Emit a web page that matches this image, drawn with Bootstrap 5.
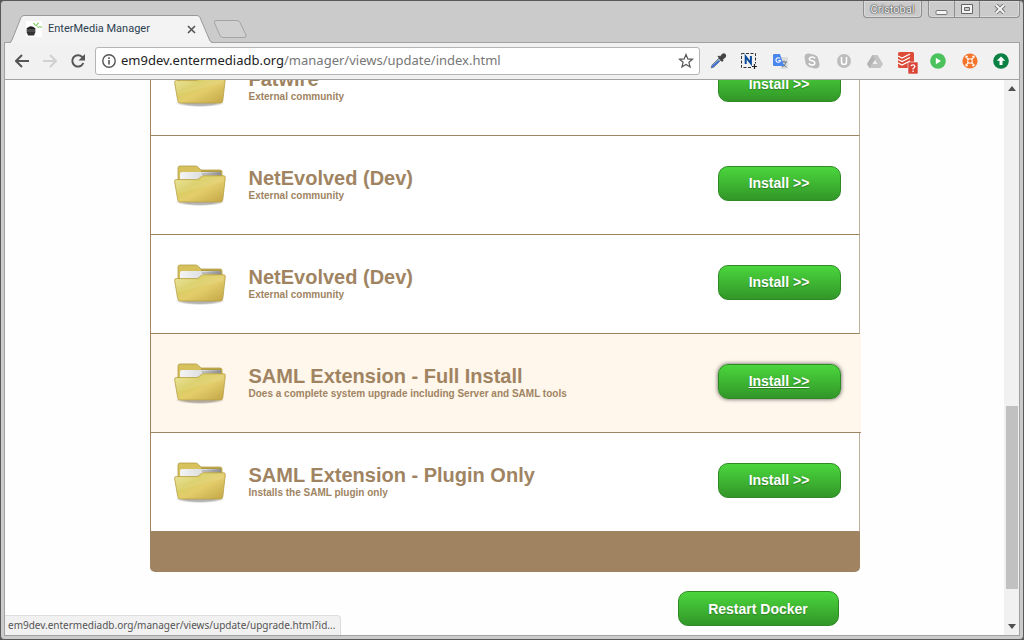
<!DOCTYPE html>
<html lang="en">
<head>
<meta charset="utf-8">
<meta name="viewport" content="width=device-width, initial-scale=1">
<title>EnterMedia Manager</title>
<link href="https://cdn.jsdelivr.net/npm/bootstrap@5.3.0/dist/css/bootstrap.min.css" rel="stylesheet">
<style>
:root { --tan: #a08462; }
body { font-family: "Liberation Sans", Arial, sans-serif; background: #555; }
.window { background: #cbcbcb; border: 1px solid #5a5858; border-radius: 4px; padding: 0 3px 3px; }
.ui-text { font-family: Roboto, "Noto Sans", sans-serif; }
.address-text { font-family: "Noto Sans", "Open Sans", sans-serif; }
/* title bar */
.title-strip { height: 41px; padding-left: 5px; }
.tab-shape { width: 204px; height: 28px; margin-bottom: -1px; z-index: 1; }
.tab-shape > svg, .new-tab svg { display: block; }
.tab-back { position: absolute; inset: 0; }
.tab-label { position: relative; height: 28px; padding: 0 17px; color: #2c3e50; font-size: 11px; }
.tab-label span { margin-left: 6px; }
.bare { background: none; border: 0; padding: 0; line-height: 1; display: inline-flex; align-items: center; justify-content: center; }
.win-controls { gap: 6px; }
.win-box { height: 17px; border: 1px solid #8f8f8f; border-top: 0; border-radius: 0 0 4px 4px; box-shadow: inset 0 0 0 1px #d9d9d9; }
.win-box .bare { height: 16px; }
.win-box .bare + .bare { border-left: 1px solid #8f8f8f; }
.user-btn { width: 57px; font-size: 11px; color: #f4f4f4; text-shadow: 0 0 1px #444, 0 0 1px #444, 0 0 2px #555; }
.w-min { width: 25px; } .w-max { width: 25px; } .w-close { width: 40px; }
/* toolbar */
.tool-strip { height: 38px; background: #f1f1f1; border: 1px solid #a2a2a2; padding: 0 8px 0 5px; }
.nav-set { gap: 4px; }
.nav-set .bare { width: 24px; height: 24px; }
.address { height: 28px; background: #fff; border: 1px solid #b5b5b5; border-radius: 3px; padding: 0 5px; margin-left: 5px; }
.url-host { color: #222; }
.url-text { font-size: 13px; color: #777; white-space: nowrap; text-decoration: none; }
.extensions { width: 303px; margin-left: 8px; }
.extensions .bare { width: 20px; height: 24px; }
/* page */
.page-area { background: #fefefe; border: 1px solid #a2a2a2; border-top: 0; flex: 1 1 0; min-height: 0; }
.scroll-pane { overflow: hidden; padding-bottom: 9px; }
.listing { width: 100%; max-width: 710px; margin: 0 auto; }
.ext-row { height: 99px; border: 1px solid #c0ae9c; border-left-color: var(--tan); border-bottom-color: var(--tan); border-top: 0; background: #fff; padding: 0 18px 0 23px; }
.ext-row.hovered { background: #fff6ec; margin-right: -1px; border-right: 0; padding-right: 20px; }
.ext-row svg { flex: none; }
.ext-row .btn-go { margin-bottom: 4px; }
.ext-info { margin-left: 23px; padding-bottom: 2px; color: var(--tan); font-weight: 700; }
.ext-info h2 { font-size: 20px; line-height: 22px; font-weight: 700; margin: 0 0 1px; }
.ext-info p { font-size: 10px; line-height: 12px; margin: 0; }
.list-foot { height: 40px; background: var(--tan); border-radius: 0 0 5px 5px; }
.btn-go { width: 123px; height: 35px; padding: 0; border: 1px solid #2f8a26; border-radius: 10px; background: linear-gradient(#4bd63d, #329628); color: #fff; font-size: 14px; line-height: 32px; font-weight: 700; text-shadow: 0 1px 1px #2c7d24; }
.btn-go:hover, .btn-go:active { color: #fff; }
.btn-go.hot { text-decoration: underline; box-shadow: 0 0 4px #555; }
.btn-wide { width: 161px; margin: 19px 21px 0 0; }
/* scroll bar */
.scroll-track { width: 15px; background: #f1f1f1; }
.scroll-track .bare { height: 17px; }
.thumb { width: 12px; background: #c1c1c1; }
.room-above { flex: 310 1 0; } .thumb { flex: 183 1 0; } .room-below { flex: 29 1 0; }
.status-tip { position: absolute; left: 0; bottom: 0; height: 20px; padding: 0 5px 0 3px; background: #f1f1f1; border: 1px solid #ddd; border-left: 0; border-bottom: 0; border-radius: 0 4px 0 0; font-size: 10px; line-height: 19px; color: #555; }
</style>
</head>
<body>
<svg width="0" height="0" class="position-absolute" aria-hidden="true">
  <defs>
    <linearGradient id="front" x1="0" y1="0" x2="1" y2="1"><stop offset="0" stop-color="#ece59a"/><stop offset=".35" stop-color="#d9cd62"/><stop offset=".55" stop-color="#e3cd6a"/><stop offset="1" stop-color="#c3a545"/></linearGradient>
    <linearGradient id="paper" x1="0" y1="0" x2="1" y2="0"><stop offset="0" stop-color="#f4f4f4"/><stop offset=".6" stop-color="#dadbdd"/><stop offset="1" stop-color="#8f9093"/></linearGradient>
    <radialGradient id="shade"><stop offset=".6" stop-color="#000" stop-opacity=".3"/><stop offset="1" stop-color="#000" stop-opacity="0"/></radialGradient>
    <symbol id="folder" viewBox="0 0 52 42">
      <ellipse cx="26" cy="38" rx="25" ry="4" fill="url(#shade)"/>
      <path d="M4 31V4q0-2 2-2h15.500q2 0 3 1.500L27 6h19q2 0 2 2v23z" fill="#d6c15c" stroke="#b39d45" stroke-width=".8"/>
      <path d="M27 6.500h19.500q1 .5 1 2V15H27z" fill="#b09a42"/>
      <path d="M6 10q0-2 2-2h38q1 0 1 1v9H6z" fill="url(#paper)"/>
      <path d="M28 10h18.500" stroke="#8a8b8e" stroke-width=".8"/>
      <path d="M.6 17.500q-.2-2 1.800-2h20.100q1.500 0 2.500-1l2.500-2q1-.8 2.500-.8h19.500q2 0 1.800 2l-2.500 22q-.3 2.300-2.500 2.300H6.200q-2.200 0-2.500-2.500z" fill="url(#front)" stroke="#b89f45" stroke-width=".8"/>
      <path d="M1.500 17h22q2 0 3-1l2.500-2.300q.7-.7 2-.7h19l-.6 5Q30 22 3 30z" fill="#fff" opacity=".1"/>
    </symbol>
  </defs>
</svg>

<div class="window vh-100 d-flex flex-column">
  <header class="title-strip d-flex flex-shrink-0">
    <div class="tab-shape position-relative align-self-end">
      <svg class="tab-back" width="204" height="28" viewBox="0 0 204 28" aria-hidden="true"><path d="M0 28 Q2 28 3 25.500L12 2.500Q13 .5 15 .5H188Q190 .5 191 2.500L201 26Q202 28 204 28z" fill="#f3f3f3"/><path d="M0 27.500Q2 27.500 3 25L12 2.500Q13 .5 15 .5H188Q190 .5 191 2.500L201 26Q202 27.500 204 27.500" fill="none" stroke="#999"/></svg>
      <div class="tab-label ui-text d-flex align-items-center">
        <svg width="16" height="16" viewBox="0 0 16 16" aria-hidden="true"><path d="M0 0h16v16H0z" fill="#fff"/><path d="M1 7q4-3.500 8 0l.5 1H.5z" fill="#222"/><path d="M.5 8h9v3h-9z" fill="#777"/><path d="M2 8v3M4 8v3M6 8v3M8 8v3" stroke="#222"/><path d="M.5 11h9L8 14.500H2z" fill="#333"/><path d="M7.500 2l2 2.500M12.500 1.500l-2.500 3.500M11 6h5" stroke="#7c5" stroke-width="1.200"/></svg>
        <span class="flex-grow-1">EnterMedia Manager</span>
        <button class="bare" aria-label="Close tab"><svg width="9" height="9" viewBox="0 0 9 9"><path d="M1 1l7 7M8 1L1 8" stroke="#555" stroke-width="1.600"/></svg></button>
      </div>
    </div>
    <button class="bare new-tab align-self-end mb-1" aria-label="New tab"><svg width="34" height="18" viewBox="0 0 34 18"><path d="M3 .5H24Q26 .5 27 2.500L33 15Q34 17.500 31 17.500H10Q8 17.500 7 15.500L1.500 3Q.5 .5 3 .5z" fill="#d0d0d0" stroke="#a4a4a4"/></svg></button>
    <div class="win-controls d-flex align-items-start ms-auto">
      <div class="win-box d-flex"><button class="bare user-btn ui-text">Cristobal</button></div>
      <div class="win-box d-flex">
        <button class="bare w-min" aria-label="Minimize"><svg width="13" height="12" viewBox="0 0 13 12"><rect x="1" y="7.500" width="11" height="4" rx="1" fill="#f4f4f4" stroke="#777"/></svg></button>
        <button class="bare w-max" aria-label="Maximize"><svg width="12" height="10" viewBox="0 0 12 10"><path d="M.5 .5h11v9H.5zM3.500 3.500h5v3h-5z" fill="#f4f4f4" fill-rule="evenodd" stroke="#666"/></svg></button>
        <button class="bare w-close" aria-label="Close"><svg width="12" height="10" viewBox="0 0 12 10"><path d="M2 1l8 8M10 1L2 9" stroke="#777" stroke-width="4"/><path d="M2 1l8 8M10 1L2 9" stroke="#f4f4f4" stroke-width="2"/></svg></button>
      </div>
    </div>
  </header>

  <nav class="tool-strip d-flex flex-shrink-0 align-items-center" aria-label="Browser toolbar">
    <div class="nav-set d-flex">
      <button class="bare" aria-label="Back"><svg width="14" height="14" viewBox="0 0 14 14"><path d="M14 7H1.500M7 1L1 7l6 6" fill="none" stroke="#555" stroke-width="2"/></svg></button>
      <button class="bare" aria-label="Forward"><svg width="14" height="14" viewBox="0 0 14 14"><path d="M0 7h12.500M7 1l6 6-6 6" fill="none" stroke="#d0d0d0" stroke-width="2"/></svg></button>
      <button class="bare" aria-label="Reload"><svg width="16" height="16" viewBox="0 0 16 16"><path d="M13.300 10A5.700 5.700 0 1 1 12 3.800L13.500 5.300" fill="none" stroke="#555" stroke-width="2"/><path d="M15 1v6.500H8.500z" fill="#555"/></svg></button>
    </div>
    <div class="address d-flex flex-grow-1 align-items-center address-text">
      <button class="bare" aria-label="Site information"><svg width="16" height="16" viewBox="0 0 16 16"><circle cx="8" cy="8" r="6.200" fill="none" stroke="#555" stroke-width="1.400"/><path d="M8 7v4.500M8 4.300v1.600" stroke="#555" stroke-width="1.600"/></svg></button>
      <a class="url-text flex-grow-1 ms-1" href="#"><span class="url-host">em9dev.entermediadb.org</span>/manager/views/update/index.html</a>
      <button class="bare" aria-label="Bookmark"><svg width="16" height="16" viewBox="0 0 16 16"><path d="M8 1.500l1.800 4.400 4.700.4-3.600 3 1.200 4.700L8 11.500 3.900 14l1.200-4.700-3.600-3 4.700-.4z" fill="none" stroke="#555" stroke-width="1.200"/></svg></button>
    </div>
    <div class="extensions d-flex flex-shrink-0 justify-content-between">
      <button class="bare" aria-label="Color picker"><svg width="18" height="18" viewBox="0 0 18 18"><path d="M2 16l1-3 7-7 2 2-7 7z" fill="#9ab" stroke="#789"/><path d="M3 15l7-6" stroke="#36d" stroke-width="1.500"/><path d="M8.500 4.500l1.500-1 1 1L13 2q2-1.500 3.500 0t0 3.500L14 7.500l.5 1-1.500 1.500z" fill="#444"/></svg></button>
      <button class="bare" aria-label="Capture"><svg width="18" height="18" viewBox="0 0 18 18"><path d="M1.500 1.500h14v10M11 15.500H1.500v-14" fill="none" stroke="#333" stroke-dasharray="3 1.500"/><path d="M5.700 12V4.700l5.200 6.600V4" fill="none" stroke="#0a4a9c" stroke-width="2"/><path d="M14.500 12v5M12 14.500h5" stroke="#222" stroke-width="1.200"/></svg></button>
      <button class="bare" aria-label="Translate"><svg width="17" height="17" viewBox="0 0 17 17"><path d="M7 4h8q1 0 1 1v10q0 1-1 1H9z" fill="#ddd"/><path d="M9 9h6M12 7.500V9M14 9q-1 4-4 5M10.500 10.500q1 2 4 3.500" fill="none" stroke="#678"/><path d="M2 1h6l4 12H2q-1 0-1-1V2q0-1 1-1z" fill="#4a86ec"/><path d="M8 5.500a2.300 2.300 0 1 0 .5 2H6.300" fill="none" stroke="#fff" stroke-width="1.100"/></svg></button>
      <button class="bare" aria-label="Skype"><svg width="16" height="16" viewBox="0 0 16 16"><g fill="#b9b9b9"><circle cx="8" cy="8" r="6.800"/><circle cx="4.500" cy="4.500" r="4"/><circle cx="11.500" cy="11.500" r="4"/></g><path d="M11 5.500Q10 4 8 4T5.300 5.800Q5.300 7.300 8 7.800t2.800 2.300Q10.500 12 8 12t-3-1.700" fill="none" stroke="#fff" stroke-width="1.600"/></svg></button>
      <button class="bare" aria-label="Shield"><svg width="16" height="16" viewBox="0 0 16 16"><circle cx="8" cy="8" r="7" fill="#bdbdbd"/><path d="M5.500 4v5q0 2.500 2.500 2.500T10.500 9V4" fill="none" stroke="#fff" stroke-width="1.500"/></svg></button>
      <button class="bare" aria-label="Drive"><svg width="16" height="16" viewBox="0 0 16 16"><path d="M5.500 2h5L16 11l-2.500 4h-11L0 11z" fill="#c4c4c4"/><path d="M5.500 2L0 11l2.500 4L8 6z" fill="#b4b4b4"/><path d="M8 7l2.500 4h-5z" fill="#eee"/></svg></button>
      <button class="bare" aria-label="Tasks"><svg width="22" height="22" viewBox="0 -1 22 22" class="flex-shrink-0 mt-1"><rect x="2" y="-1" width="16" height="16" rx="1.500" fill="#dd4b39"/><path d="M2 3l4 2 8-4M2 6.500l4 2 8-4M2 10l4 2 8-4" fill="none" stroke="#fff" stroke-width="1.200"/><rect x="12" y="9" width="10" height="12" rx="1" fill="#da4437" stroke="#f1f1f1" stroke-width=".6"/><path d="M15 13.200Q15.300 11.800 17 11.800T18.900 13.400Q18.900 14.300 17.100 15.500V16.500M17.100 17.500v1.400" fill="none" stroke="#fff" stroke-width="1.300"/></svg></button>
      <button class="bare" aria-label="Play"><svg width="16" height="16" viewBox="0 0 16 16"><circle cx="8" cy="8" r="7.800" fill="#4bc25b"/><path d="M5.800 4.800v6.400L11 8z" fill="#fff"/></svg></button>
      <button class="bare" aria-label="Film"><svg width="16" height="16" viewBox="0 0 16 16"><circle cx="8" cy="8" r="7.600" fill="#f4742a"/><path d="M3.500 4.500l2-1.500M10.500 3l2 1.500M3.500 11.500l2 1.500M10.500 13l2-1.500M5 5l6 6M11 5l-6 6" stroke="#fff" stroke-width="1.600"/><circle cx="8" cy="8" r="2.300" fill="#f4742a" stroke="#fff" stroke-width="1"/></svg></button>
      <button class="bare" aria-label="Update"><svg width="16" height="16" viewBox="0 0 16 16"><circle cx="8" cy="8" r="7.800" fill="#0a8043"/><path d="M8 3.500l4.300 4.300H9.500V12h-3V7.800H3.700z" fill="#fff"/></svg></button>
    </div>
  </nav>

  <div class="page-area position-relative d-flex overflow-hidden">
    <main class="scroll-pane d-flex flex-column justify-content-end flex-grow-1">
      <div class="listing">
        <section class="ext-row d-flex align-items-center">
          <svg width="52" height="42" aria-hidden="true"><use href="#folder"/></svg>
          <div class="ext-info"><h2>Fatwire</h2><p>External community</p></div>
          <button class="btn btn-go ms-auto">Install &gt;&gt;</button>
        </section>
        <section class="ext-row d-flex align-items-center">
          <svg width="52" height="42" aria-hidden="true"><use href="#folder"/></svg>
          <div class="ext-info"><h2>NetEvolved (Dev)</h2><p>External community</p></div>
          <button class="btn btn-go ms-auto">Install &gt;&gt;</button>
        </section>
        <section class="ext-row d-flex align-items-center">
          <svg width="52" height="42" aria-hidden="true"><use href="#folder"/></svg>
          <div class="ext-info"><h2>NetEvolved (Dev)</h2><p>External community</p></div>
          <button class="btn btn-go ms-auto">Install &gt;&gt;</button>
        </section>
        <section class="ext-row hovered d-flex align-items-center">
          <svg width="52" height="42" aria-hidden="true"><use href="#folder"/></svg>
          <div class="ext-info"><h2>SAML Extension - Full Install</h2><p>Does a complete system upgrade including Server and SAML tools</p></div>
          <button class="btn btn-go hot ms-auto">Install &gt;&gt;</button>
        </section>
        <section class="ext-row d-flex align-items-center">
          <svg width="52" height="42" aria-hidden="true"><use href="#folder"/></svg>
          <div class="ext-info"><h2>SAML Extension - Plugin Only</h2><p>Installs the SAML plugin only</p></div>
          <button class="btn btn-go ms-auto">Install &gt;&gt;</button>
        </section>
        <div class="list-foot"></div>
        <div class="d-flex justify-content-end"><button class="btn btn-go btn-wide">Restart Docker</button></div>
      </div>
    </main>
    <div class="scroll-track d-flex flex-column align-items-center" aria-hidden="true">
      <button class="bare" tabindex="-1"><svg width="8" height="5" viewBox="0 0 8 5"><path d="M0 5l4-5 4 5z" fill="#505050"/></svg></button>
      <div class="room-above"></div><div class="thumb"></div><div class="room-below"></div>
      <button class="bare" tabindex="-1"><svg width="8" height="5" viewBox="0 0 8 5"><path d="M0 0l4 5 4-5z" fill="#505050"/></svg></button>
    </div>
    <div class="status-tip address-text">em9dev.entermediadb.org/manager/views/update/upgrade.html?id...</div>
  </div>
</div>
<script src="https://cdn.jsdelivr.net/npm/bootstrap@5.3.0/dist/js/bootstrap.bundle.min.js"></script>
</body>
</html>
